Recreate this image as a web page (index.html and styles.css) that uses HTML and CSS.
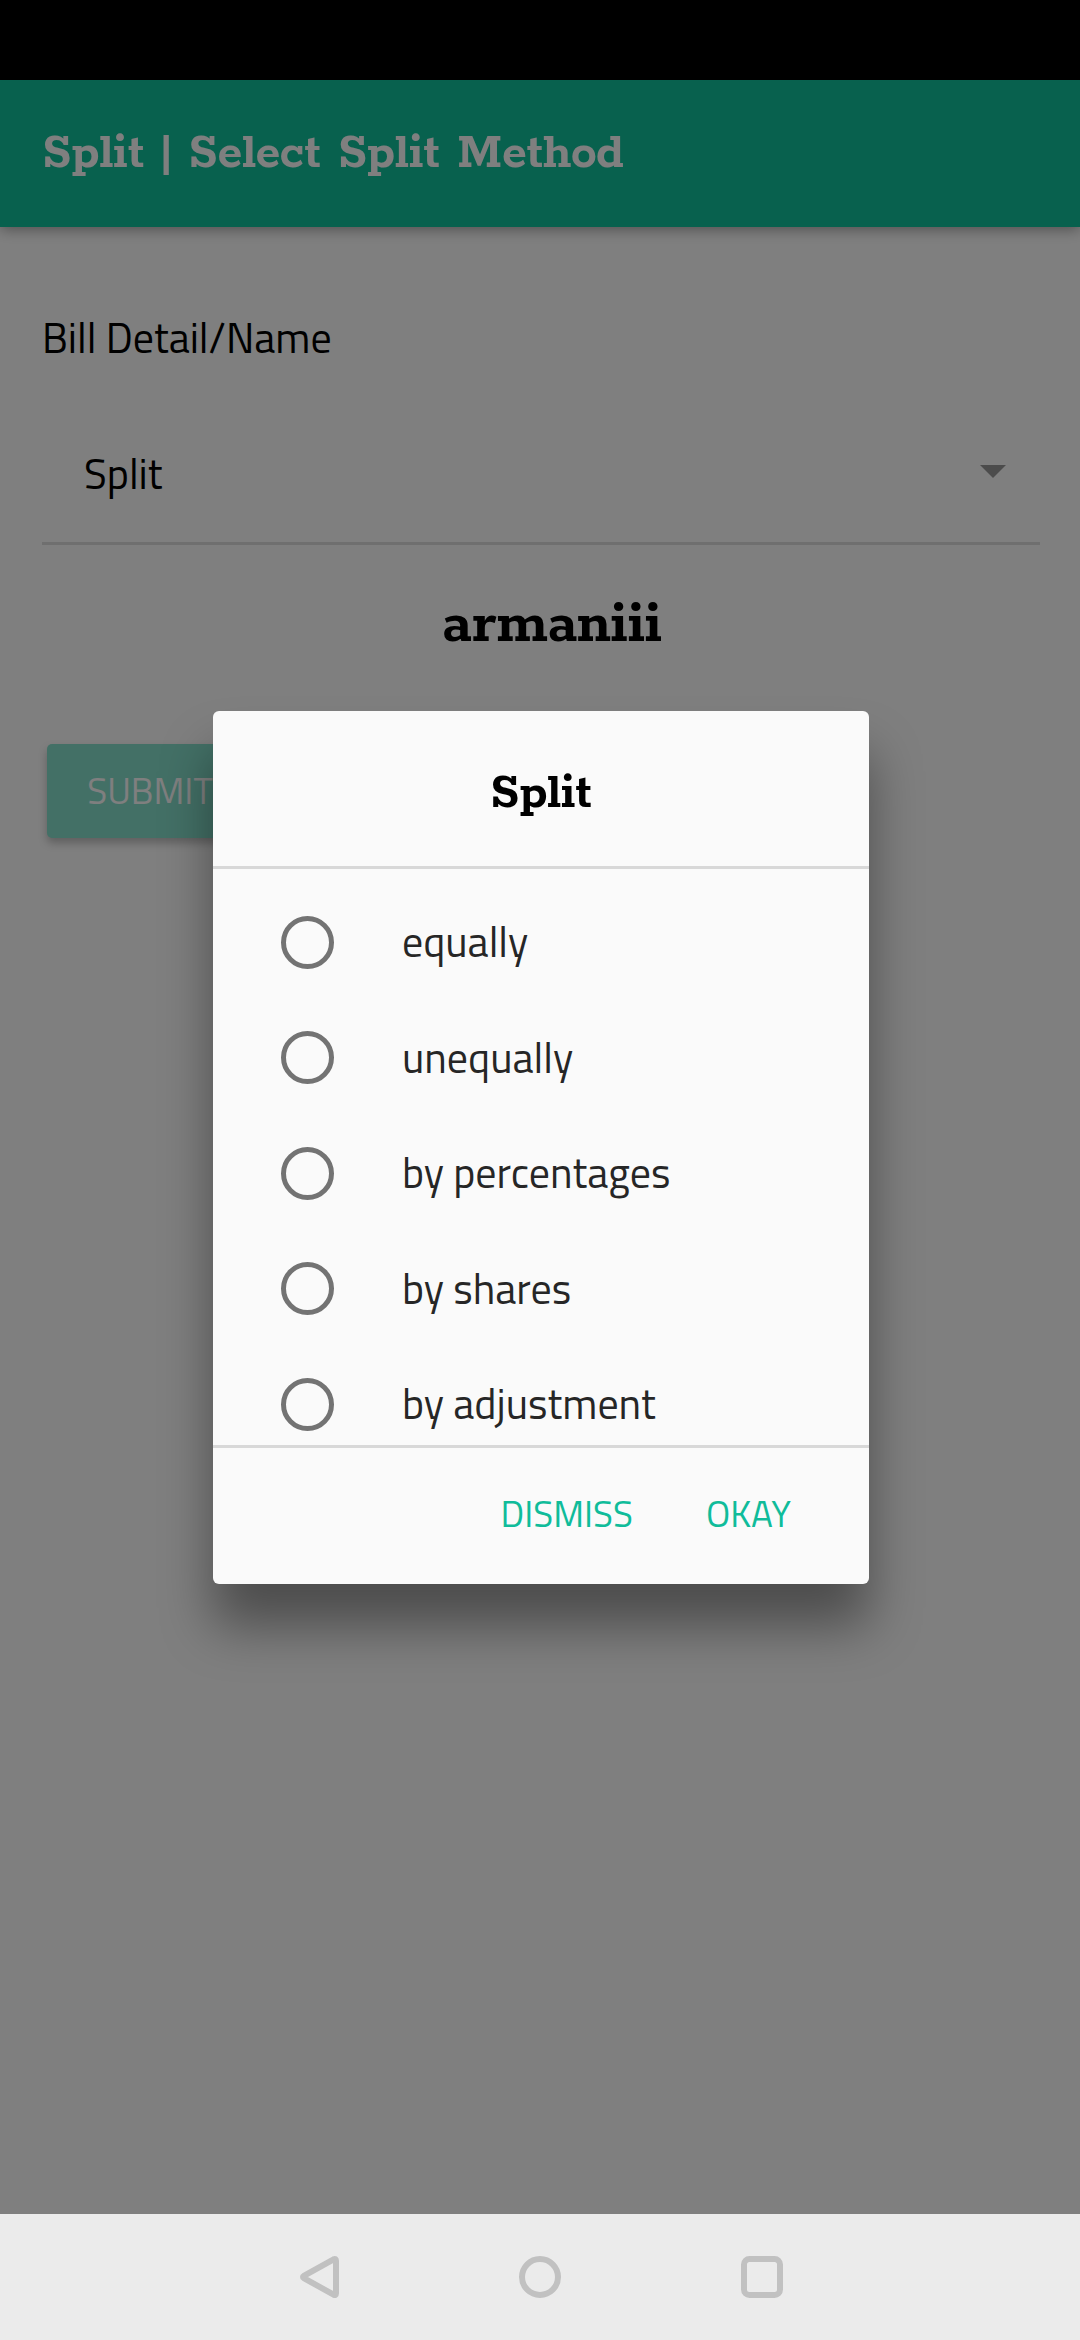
FILE: index.html
```
<!DOCTYPE html>
<html lang="en">
<head>
<meta charset="utf-8">
<title>Split | Select Split Method</title>
<link rel="stylesheet" href="styles.css">
</head>
<body>
<div class="screen">
  <div class="status-bar"></div>
  <div class="app">
    <header class="toolbar"><h1 class="toolbar-title">Split | Select Split Method</h1></header>
    <main class="content">
      <label class="field-label">Bill Detail/Name</label>
      <div class="select">
        <span>Split</span>
        <span class="select-arrow"></span>
      </div>
      <h2 class="member">armaniii</h2>
      <button class="submit" disabled>SUBMIT</button>
    </main>
    <div class="backdrop">
      <section class="dialog" role="dialog">
        <h2 class="dialog-title">Split</h2>
        <div class="options">
          <div class="option"><span class="radio"></span><span class="option-label">equally</span></div>
          <div class="option"><span class="radio"></span><span class="option-label">unequally</span></div>
          <div class="option"><span class="radio"></span><span class="option-label">by percentages</span></div>
          <div class="option"><span class="radio"></span><span class="option-label">by shares</span></div>
          <div class="option"><span class="radio"></span><span class="option-label">by adjustment</span></div>
        </div>
        <footer class="actions">
          <button class="action">DISMISS</button>
          <button class="action">OKAY</button>
        </footer>
      </section>
    </div>
  </div>
  <nav class="nav-bar">
    <svg class="nav-icon" viewBox="0 0 48 48"><path d="M9.8 22.9 39.6 6.3Q42 5.2 42 7.7V40.3Q42 42.8 39.6 41.7L9.8 25.1Q8.2 24 9.8 22.9Z"/></svg>
    <svg class="nav-icon" viewBox="0 0 48 48"><circle cx="24" cy="24" r="18"/></svg>
    <svg class="nav-icon" viewBox="0 0 48 48"><rect x="6" y="6" width="36" height="36" rx="5.5"/></svg>
  </nav>
</div>
</body>
</html>
```
FILE: styles.css
```
* { box-sizing: border-box; }

body {
  margin: 0;
  background: #000;
  color: #000;
  font: 400 42px/64px "Titillium Web", "Open Sans", sans-serif;
}

h1, h2 {
  margin: 0;
  font-family: Rokkitt, "DejaVu Serif", serif;
  font-weight: 650;
  letter-spacing: -.15px;
}

button {
  border: 0;
  background: none;
  font-family: inherit;
  font-size: 36.75px;
}

.screen {
  display: flex;
  flex-direction: column;
  width: 1080px;
  height: 2340px;
  overflow: hidden;
}

.status-bar { flex: 0 0 80px; }

.app {
  position: relative;
  flex: 1;
  display: flex;
  flex-direction: column;
  background: #fff;
}

.toolbar {
  display: flex;
  align-items: center;
  height: 147px;
  padding: 0 42px;
  background: #10c29c;
  color: #fff;
  box-shadow: 0 2px 14px rgba(0, 0, 0, .4);
}

.toolbar-title {
  font-size: 52.5px;
  line-height: 60px;
  letter-spacing: -.05px;
  word-spacing: .5px;
}

.content {
  display: flex;
  flex-direction: column;
  padding: 78px 40px 0 42px;
}

.field-label { line-height: 64px; }

.select {
  display: flex;
  align-items: center;
  justify-content: space-between;
  height: 176px;
  padding: 35px 34px 0 42px;
  border-bottom: 3px solid #dedede;
}

.select-arrow {
  width: 26px;
  height: 13px;
  margin-top: -3px;
  background: #999;
  clip-path: polygon(0 0, 100% 0, 50% 100%);
}

.member {
  margin-top: 43px;
  padding-left: 22px;
  font-size: 63px;
  line-height: 76px;
  text-align: center;
}

.submit {
  align-self: flex-start;
  width: 206px;
  height: 94px;
  margin: 80px 0 0 5px;
  padding: 0 0 2px;
  border-radius: 5px;
  background: #10c29c;
  color: #fff;
  opacity: .5;
  box-shadow: 0 5px 8px rgba(0, 0, 0, .5);
}

.backdrop {
  position: absolute;
  inset: 0;
  display: flex;
  justify-content: center;
  align-items: flex-start;
  padding: 631px 0 0 2px;
  background: rgba(0, 0, 0, .5);
}

.dialog {
  width: 656px;
  height: 873px;
  border-radius: 6px;
  background: #fafafa;
  box-shadow: 0 42px 52px rgba(0, 0, 0, .4);
}

.dialog-title {
  height: 158px;
  padding-top: 53px;
  border-bottom: 3px solid #d8d8d8;
  font-size: 52.5px;
  line-height: 60px;
  text-align: center;
}

.options {
  height: 579px;
  padding-top: 15.5px;
  overflow: hidden;
  border-bottom: 3px solid #d8d8d8;
  color: #262626;
}

.option {
  display: flex;
  align-items: center;
  gap: 68px;
  height: 115.5px;
  padding-left: 68px;
}

.option-label { padding-bottom: 2px; }

.radio {
  width: 53px;
  height: 53px;
  border: 5px solid #737373;
  border-radius: 50%;
}

.actions {
  display: flex;
  justify-content: flex-end;
  padding: 18px 52px 0 0;
}

.action {
  height: 94px;
  padding: 0 26px;
  color: #10bc9a;
}

.action + .action { margin-left: 21px; }

.nav-bar {
  flex: 0 0 126px;
  display: flex;
  justify-content: center;
  align-items: center;
  gap: 174px;
  background: #ebebeb;
}

.nav-icon {
  width: 48px;
  height: 48px;
  fill: none;
  stroke: #c1c1c1;
  stroke-width: 6px;
  stroke-linejoin: round;
}
```
